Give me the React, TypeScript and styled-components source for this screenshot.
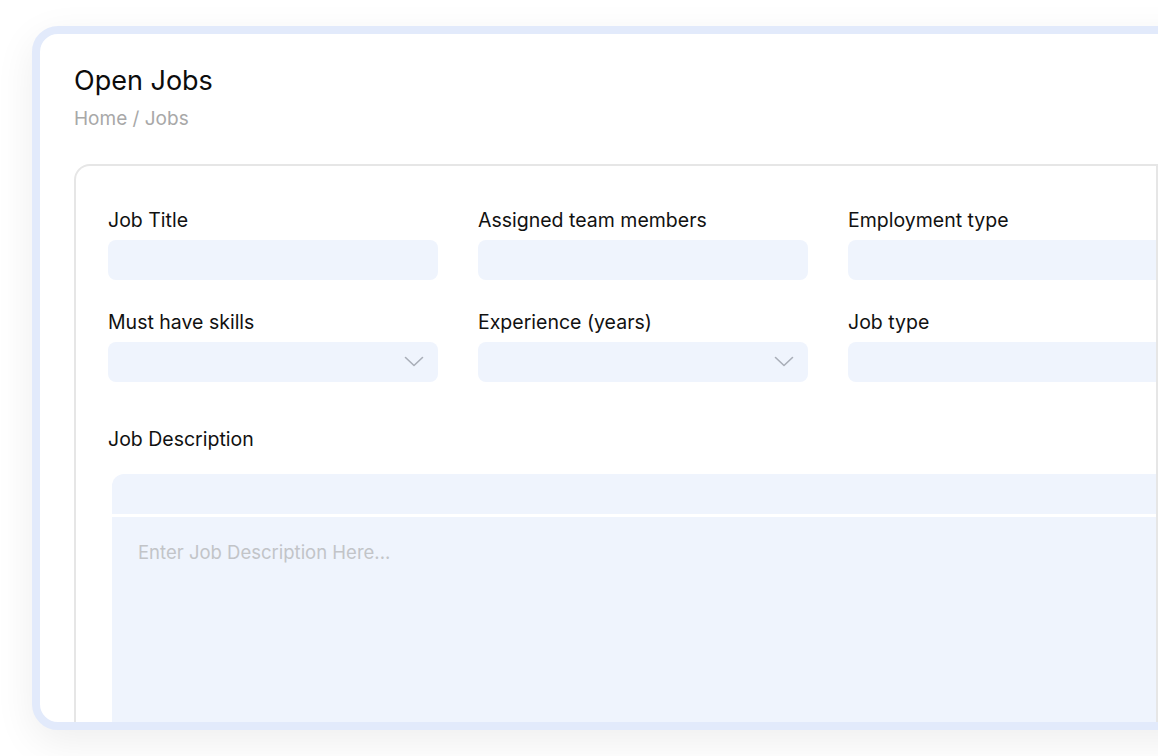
import React from "react";
import styled, { createGlobalStyle } from "styled-components";

const GlobalStyle = createGlobalStyle`
  html, body { margin: 0; padding: 0; background: #ffffff; }
  body { font-family: Inter, "Noto Sans", sans-serif; overflow: hidden; }
  * { box-sizing: border-box; }
`;

const Page = styled.div`
  width: 1158px;
  height: 756px;
  overflow: hidden;
  padding: 26px 0 0 32px;
  background: #ffffff;
`;

const Frame = styled.div`
  width: 1220px;
  height: 704px;
  border: 8px solid #e2eafb;
  border-radius: 26px;
  background: #ffffff;
  overflow: hidden;
  box-shadow: 0 12px 40px rgba(0, 0, 0, 0.07);
  padding: 30px 0 0 34px;
`;

const Title = styled.h1`
  margin: 0;
  font-size: 27px;
  line-height: 34px;
  font-weight: 400;
  color: #0c0c0c;
`;

const Crumbs = styled.div`
  margin-top: 10px;
  font-size: 19px;
  line-height: 22px;
  color: #a8a8a8;
`;

const Card = styled.div`
  margin-top: 34px;
  width: 1084px;
  height: 620px;
  border: 2px solid #e6e6e6;
  border-bottom: none;
  border-radius: 16px 0 0 0;
  overflow: hidden;
  padding: 42px 0 0 32px;
`;

const Grid = styled.div`
  display: grid;
  grid-template-columns: repeat(3, 330px);
  column-gap: 40px;
  row-gap: 30px;
`;

const Field = styled.div`
  display: flex;
  flex-direction: column;
  gap: 8px;
`;

const Label = styled.div`
  font-size: 19.5px;
  line-height: 24px;
  color: #111111;
`;

const Input = styled.div`
  position: relative;
  height: 40px;
  border-radius: 8px;
  background: #eff4fd;
`;

const Chevron = styled.svg`
  position: absolute;
  right: 14px;
  top: 14px;
`;

const DescLabel = styled(Label)`
  margin-top: 45px;
`;

const Editor = styled.div`
  margin: 23px 0 0 4px;
  width: 1100px;
  display: flex;
  flex-direction: column;
  gap: 3px;
`;

const Toolbar = styled.div`
  height: 40px;
  border-radius: 12px 12px 0 0;
  background: #eff4fd;
`;

const Body = styled.div`
  height: 300px;
  background: #eff4fd;
  padding: 24px 0 0 26px;
  font-size: 18.5px;
  line-height: 22px;
  color: #c2c4c8;
`;

const ChevronIcon = () => (
  <Chevron width="20" height="12" viewBox="0 0 20 12" fill="none">
    <path d="M1.5 1.5 L10 9.5 L18.5 1.5" stroke="#a9aeb8" strokeWidth="1.6" strokeLinecap="round" strokeLinejoin="round" />
  </Chevron>
);

const fields: { label: string; select?: boolean }[] = [
  { label: "Job Title" },
  { label: "Assigned team members" },
  { label: "Employment type" },
  { label: "Must have skills", select: true },
  { label: "Experience (years)", select: true },
  { label: "Job type" },
];

export default function App() {
  return (
    <>
      <GlobalStyle />
      <Page>
        <Frame>
          <Title>Open Jobs</Title>
          <Crumbs>Home / Jobs</Crumbs>
          <Card>
            <Grid>
              {fields.map((f) => (
                <Field key={f.label}>
                  <Label>{f.label}</Label>
                  <Input>{f.select && <ChevronIcon />}</Input>
                </Field>
              ))}
            </Grid>
            <DescLabel>Job Description</DescLabel>
            <Editor>
              <Toolbar />
              <Body>Enter Job Description Here...</Body>
            </Editor>
          </Card>
        </Frame>
      </Page>
    </>
  );
}
